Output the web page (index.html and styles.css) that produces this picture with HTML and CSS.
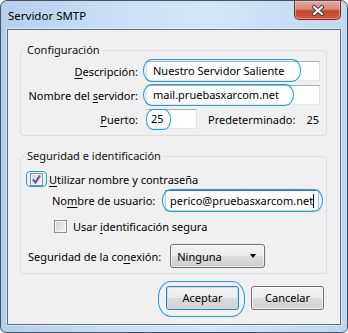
FILE: index.html
```html
<html>
	<head>
		<link rel="stylesheet" href="styles.css">
	</head>
	<body>
		<div class="window">
			<div class="titlebar">
				<span class="title">Servidor SMTP</span>
				<div class="close">
					<svg width="14" height="11" viewBox="0 0 14 11">
						<path d="M3 2 L11 9 M11 2 L3 9" stroke="#3b3f46" stroke-width="4.2" stroke-linecap="round"/>
						<path d="M3 2 L11 9 M11 2 L3 9" stroke="#fff" stroke-width="2.2" stroke-linecap="round"/>
					</svg>
				</div>
			</div>

			<div class="client">
				<fieldset class="group">
					<legend>Configuración</legend>
					<div class="form">
						<label class="lbl"><u>D</u>escripción:</label>
						<div class="input">Nuestro Servidor Saliente<span class="ring ring-desc"></span></div>

						<label class="lbl">Nombre del <u>s</u>ervidor:</label>
						<div class="input">mail.pruebasxarcom.net<span class="ring ring-server"></span></div>

						<label class="lbl"><u>P</u>uerto:</label>
						<div class="port-row">
							<div class="input port">25<span class="ring ring-port"></span></div>
							<span class="default-lbl">Predeterminado:</span>
							<span class="default-val">25</span>
						</div>
					</div>
				</fieldset>

				<fieldset class="group security">
					<legend>Seguridad e identificación</legend>
					<div class="check-row">
						<span class="checkbox">
							<svg width="11" height="11" viewBox="0 0 11 11">
								<path d="M2 5.5 L4.5 8.5 L9 1.5" stroke="#4b5f96" stroke-width="2" fill="none"/>
							</svg>
							<span class="ring ring-check"></span>
						</span>
						<span><u>U</u>tilizar nombre y contraseña</span>
					</div>

					<div class="user-row">
						<label>No<u>m</u>bre de usuario:</label>
						<div class="input focused">perico@pruebasxarcom.net<span class="caret"></span><span class="ring ring-user"></span></div>
					</div>

					<div class="check-row sub">
						<span class="checkbox"></span>
						<span>Usar <u>i</u>dentificación segura</span>
					</div>

					<div class="conn-row">
						<label>Seguridad de la co<u>n</u>exión:</label>
						<div class="select">
							<span>Ninguna</span>
							<span class="arrow"></span>
						</div>
					</div>
				</fieldset>

				<div class="buttons">
					<div class="btn default">Aceptar<span class="ring ring-ok"></span></div>
					<div class="btn">Cancelar</div>
				</div>
			</div>
		</div>
	</body>
</html>
```

FILE: styles.css
```css
* {
	box-sizing: border-box;
}
body {
	margin: 0;
	font-family: "Noto Sans", "Open Sans", sans-serif;
	font-size: 11px;
	color: #000;
	background: #fff;
}
u {
	text-decoration-thickness: 1px;
	text-underline-offset: 2px;
}

.window {
	width: 348px;
	height: 333px;
	display: flex;
	flex-direction: column;
	padding: 0 6px 7px 6px;
	border: 1px solid #46525f;
	border-radius: 7px 7px 6px 6px;
	background: linear-gradient(to right, #b3cfee 0%, #c9def5 30%, #d3e6f8 60%, #bfd7f1 100%);
}

.titlebar {
	height: 28px;
	display: flex;
	justify-content: space-between;
	align-items: flex-start;
	padding-left: 1px;
}
.title {
	line-height: 29px;
	font-size: 11.5px;
	color: #000;
}
.close {
	width: 47px;
	height: 19px;
	display: flex;
	align-items: center;
	justify-content: center;
	border: 1px solid #6e3129;
	border-top: none;
	border-radius: 0 0 5px 5px;
	background: linear-gradient(#e7a898 0%, #d98a79 45%, #c4472f 55%, #d2583d 100%);
	box-shadow: inset 0 0 0 1px rgba(255, 210, 200, .45);
}

.client {
	flex: 1;
	border: 1px solid #5f6d7e;
	background: #f0f0f0;
	box-shadow: 0 0 0 1px rgba(255, 255, 255, .45);
}

.group {
	margin: 12px 13px 0 12px;
	padding: 3px 6px 6px 7px;
	border: 1px solid #d5dfe5;
	border-radius: 3px;
	min-width: 0;
}
.group legend {
	padding: 0 2px;
	margin-left: -3px;
	line-height: 16px;
	color: #111;
}

.form {
	display: grid;
	grid-template-columns: 110px 174px;
	column-gap: 8px;
	row-gap: 4px;
	align-items: center;
}
.lbl {
	text-align: right;
	white-space: nowrap;
}

.input {
	position: relative;
	height: 20px;
	line-height: 18px;
	padding: 0 6px;
	background: #fff;
	border: 1px solid;
	border-color: #abadb3 #dbdfe6 #e3e9ef #e2e3ea;
	white-space: nowrap;
}
.input.port {
	width: 51px;
	padding: 0 4px;
}
.input.focused {
	width: 154px;
	height: 21px;
	line-height: 19px;
	padding: 0 4px;
	margin-left: auto;
	margin-right: 1px;
	border-color: #3d7bad #a4c9e3 #b7d9ed #b5cfe7;
}
.caret {
	display: inline-block;
	width: 1px;
	height: 14px;
	background: #000;
	vertical-align: -3px;
}

.port-row {
	display: flex;
	align-items: center;
}
.default-lbl {
	margin-left: 11px;
}
.default-val {
	margin-left: auto;
	margin-right: 1px;
}

/* blue marker rings drawn over the controls */
.ring {
	position: absolute;
	border: 1px solid #1b9fe1;
	pointer-events: none;
}
.ring-desc {
	left: -4px;
	top: -3px;
	width: 158px;
	height: 23px;
	border-radius: 9px / 11px;
}
.ring-server {
	left: -4px;
	top: -2px;
	width: 151px;
	height: 22px;
	border-radius: 9px / 11px;
}
.ring-port {
	left: -1px;
	top: -1px;
	width: 25px;
	height: 21px;
	border-radius: 7px / 10px;
}
.ring-check {
	left: -5px;
	top: -3px;
	width: 21px;
	height: 16px;
	border-radius: 4px;
}
.ring-user {
	left: -4px;
	top: -2px;
	width: 161px;
	height: 23px;
	border-radius: 9px / 11px;
}
.ring-ok {
	left: -9px;
	top: -6px;
	width: 87px;
	height: 36px;
	border-radius: 13px / 16px;
}

.security {
	padding-top: 7px;
	padding-bottom: 5px;
}
.check-row {
	display: flex;
	align-items: center;
	height: 16px;
	gap: 6px;
}
.check-row .checkbox {
	margin-left: 2px;
}
.check-row.sub {
	margin-top: 7px;
}
.check-row.sub .checkbox {
	margin-left: 26px;
}
.checkbox {
	position: relative;
	width: 13px;
	height: 13px;
	display: flex;
	align-items: center;
	justify-content: center;
	border: 1px solid #8e8f8f;
	background: linear-gradient(135deg, #cdd0d5 0%, #e6e7e9 60%, #f6f6f6 100%);
	box-shadow: inset 0 0 0 1px #f4f4f4;
}

.user-row {
	display: flex;
	align-items: center;
	margin-top: 3px;
}
.user-row label {
	margin-left: 24px;
}

.conn-row {
	display: flex;
	align-items: center;
	margin-top: 10px;
}
.select {
	width: 95px;
	height: 24px;
	margin-left: 9px;
	display: flex;
	align-items: center;
	justify-content: space-between;
	padding: 0 8px 0 6px;
	border: 1px solid #707070;
	border-radius: 3px;
	background: linear-gradient(#f2f2f2 0%, #ebebeb 50%, #dddddd 51%, #cfcfcf 100%);
	box-shadow: inset 0 0 0 1px rgba(255, 255, 255, .6);
}
.arrow {
	width: 0;
	height: 0;
	border-left: 3.5px solid transparent;
	border-right: 3.5px solid transparent;
	border-top: 4px solid #000;
}

.buttons {
	display: flex;
	justify-content: flex-end;
	gap: 12px;
	margin-top: 12px;
	padding-right: 16px;
}
.btn {
	position: relative;
	width: 73px;
	height: 24px;
	line-height: 22px;
	text-align: center;
	border: 1px solid #707070;
	border-radius: 3px;
	background: linear-gradient(#f2f2f2 0%, #ebebeb 50%, #dddddd 51%, #cfcfcf 100%);
	box-shadow: inset 0 0 0 1px rgba(255, 255, 255, .7);
}
.btn.default {
	border-color: #3c7fb1;
	box-shadow: inset 0 0 0 1px #b6e2f8;
}
```
